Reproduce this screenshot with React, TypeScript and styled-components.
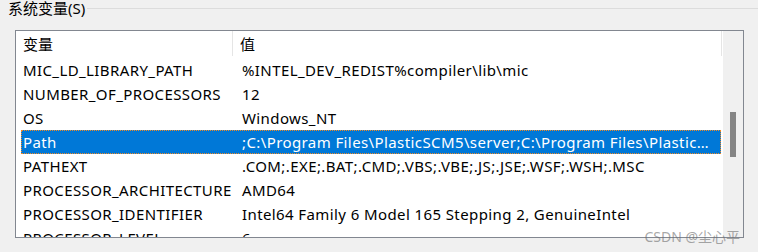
import styled, { createGlobalStyle } from "styled-components";

const GlobalStyle = createGlobalStyle`
  html, body {
    margin: 0;
    padding: 0;
    background: #f0f0f0;
  }
  body {
    font-family: "Noto Sans", "Noto Sans CJK SC", sans-serif;
    color: #000;
  }
`;

const Page = styled.div`
  position: relative;
  width: 758px;
  height: 252px;
  overflow: hidden;
  background: #f0f0f0;
`;

const GroupHead = styled.div`
  display: flex;
  align-items: center;
  height: 17px;
  padding-left: 8px;
`;

const GroupLabel = styled.span`
  font-size: 15px;
  line-height: 17px;
  padding-right: 2px;
  white-space: nowrap;
`;

const GroupLine = styled.div`
  flex: 1;
  height: 1px;
  background: #dcdcdc;
`;

const ListBox = styled.div`
  display: flex;
  margin: 13px 0 0 15px;
  width: 727px;
  height: 206px;
  border: 1px solid #828790;
  background: #fff;
  overflow: hidden;
`;

const Content = styled.div`
  flex: 1;
  display: flex;
  flex-direction: column;
  min-width: 0;
`;

const Header = styled.div`
  display: flex;
  height: 27px;
  flex-shrink: 0;
  margin-right: 1px;
`;

const HeaderCell = styled.div<{ $width?: number }>`
  ${(p) => (p.$width ? `width: ${p.$width}px;` : "flex: 1;")}
  flex-shrink: 0;
  box-sizing: border-box;
  display: flex;
  align-items: center;
  padding-left: 7px;
  border-right: 1px solid #e5e5e5;
  font-size: 15px;
  margin-bottom: 2px;
`;

const Row = styled.div<{ $selected?: boolean }>`
  display: flex;
  align-items: center;
  height: 24px;
  flex-shrink: 0;
  margin: 0 2px 0 5px;
  box-sizing: border-box;
  font-size: 15px;
  letter-spacing: 0.4px;
  white-space: nowrap;
  background: ${(p) => (p.$selected ? "#0078d7" : "transparent")};
  color: ${(p) => (p.$selected ? "#fff" : "#000")};
  outline: ${(p) => (p.$selected ? "1px dotted #f08a24" : "none")};
  outline-offset: -1px;
`;

const NameCell = styled.div`
  width: 212px;
  flex-shrink: 0;
  padding-left: 2px;
  overflow: hidden;
`;

const ValueCell = styled.div`
  flex: 1;
  min-width: 0;
  padding: 0 4px 0 7px;
  overflow: hidden;
  text-overflow: ellipsis;
`;

const ScrollBar = styled.div`
  width: 20px;
  flex-shrink: 0;
  background: #f0f0f0;
  display: flex;
  justify-content: center;
`;

const Thumb = styled.div`
  width: 6px;
  height: 45px;
  margin-top: 81px;
  background: #858585;
`;

const Watermark = styled.div`
  position: absolute;
  right: 18px;
  bottom: 6px;
  font-family: "Noto Sans", "Noto Sans CJK SC", sans-serif;
  font-size: 14px;
  color: rgba(110, 110, 110, 0.6);
`;

const rows = [
  ["MIC_LD_LIBRARY_PATH", "%INTEL_DEV_REDIST%compiler\\lib\\mic"],
  ["NUMBER_OF_PROCESSORS", "12"],
  ["OS", "Windows_NT"],
  [
    "Path",
    ";C:\\Program Files\\PlasticSCM5\\server;C:\\Program Files\\PlasticSCM5\\client;C:\\Windows\\system32",
  ],
  ["PATHEXT", ".COM;.EXE;.BAT;.CMD;.VBS;.VBE;.JS;.JSE;.WSF;.WSH;.MSC"],
  ["PROCESSOR_ARCHITECTURE", "AMD64"],
  ["PROCESSOR_IDENTIFIER", "Intel64 Family 6 Model 165 Stepping 2, GenuineIntel"],
  ["PROCESSOR_LEVEL", "6"],
];

export default function App() {
  return (
    <Page>
      <GlobalStyle />
      <GroupHead>
        <GroupLabel>系统变量(S)</GroupLabel>
        <GroupLine />
      </GroupHead>
      <ListBox>
        <Content>
          <Header>
            <HeaderCell $width={217}>变量</HeaderCell>
            <HeaderCell>值</HeaderCell>
          </Header>
          {rows.map(([name, value]) => (
            <Row key={name} $selected={name === "Path"}>
              <NameCell>{name}</NameCell>
              <ValueCell>{value}</ValueCell>
            </Row>
          ))}
        </Content>
        <ScrollBar>
          <Thumb />
        </ScrollBar>
      </ListBox>
      <Watermark>CSDN @尘心平</Watermark>
    </Page>
  );
}
